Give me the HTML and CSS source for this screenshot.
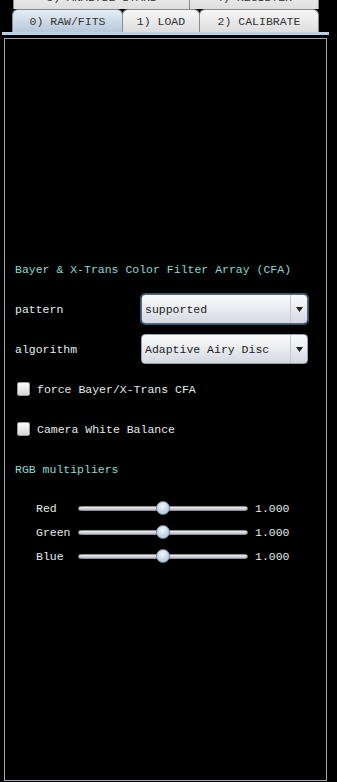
FILE: index.html
```html
<!DOCTYPE html>
<html>
<head>
<meta charset="utf-8">
<link rel="stylesheet" href="styles.css">
</head>
<body>
<div class="app">
  <div class="tabs-back">
    <div class="tab tab-back tab-w3">3) ANALYSE STARS</div>
    <div class="tab tab-back tab-w4">4) REGISTER</div>
  </div>
  <div class="tabs-front">
    <div class="tab tab-selected tab-w0">0) RAW/FITS</div>
    <div class="tab tab-w1">1) LOAD</div>
    <div class="tab tab-w2">2) CALIBRATE</div>
  </div>
  <div class="tab-line"></div>
  <div class="panel">
    <div class="row heading">Bayer &amp; X-Trans Color Filter Array (CFA)</div>
    <div class="row">
      <span class="label">pattern</span>
      <div class="combo focused"><span class="combo-text">supported</span><span class="combo-arrow"><svg width="7" height="5" viewBox="0 0 7 5"><path d="M0 0H7L3.5 5Z" fill="#222"/></svg></span></div>
    </div>
    <div class="row">
      <span class="label">algorithm</span>
      <div class="combo"><span class="combo-text">Adaptive Airy Disc</span><span class="combo-arrow"><svg width="7" height="5" viewBox="0 0 7 5"><path d="M0 0H7L3.5 5Z" fill="#222"/></svg></span></div>
    </div>
    <div class="row">
      <span class="checkbox"></span><span class="check-label">force Bayer/X-Trans CFA</span>
    </div>
    <div class="row">
      <span class="checkbox"></span><span class="check-label">Camera White Balance</span>
    </div>
    <div class="row heading">RGB multipliers</div>
    <div class="sliders">
      <div class="slider-row">
        <span class="slider-label">Red</span>
        <div class="track"><span class="thumb"></span></div>
        <span class="slider-value">1.000</span>
      </div>
      <div class="slider-row">
        <span class="slider-label">Green</span>
        <div class="track"><span class="thumb"></span></div>
        <span class="slider-value">1.000</span>
      </div>
      <div class="slider-row">
        <span class="slider-label">Blue</span>
        <div class="track"><span class="thumb"></span></div>
        <span class="slider-value">1.000</span>
      </div>
    </div>
  </div>
</div>
</body>
</html>
```
FILE: styles.css
```css
* { box-sizing: border-box; }
html, body {
  margin: 0;
  padding: 0;
  background: #000;
}
body {
  font-family: "Liberation Mono", "Courier New", monospace;
  font-size: 11.5px;
  color: #e2ecea;
  width: 337px;
  height: 782px;
  overflow: hidden;
}
.app {
  display: flex;
  flex-direction: column;
}
.tabs-back {
  height: 9px;
  overflow: hidden;
  display: flex;
  align-items: flex-end;
  padding-left: 13px;
}
.tabs-front {
  height: 23px;
  display: flex;
  padding-left: 12px;
}
.tab {
  display: flex;
  align-items: center;
  justify-content: center;
  border: 1px solid #8c8c90;
  border-bottom: none;
  border-radius: 6px 6px 0 0;
  background: linear-gradient(#f6f6f6, #dedede);
  color: #333;
  white-space: nowrap;
}
.tab + .tab { margin-left: -1px; }
.tab-back { height: 24px; }
.tab-w3 { width: 177px; }
.tab-w4 { width: 130px; }
.tab-w0 { width: 111px; }
.tab-w1 { width: 78px; }
.tab-w2 { width: 120px; }
.tab-selected {
  background: linear-gradient(#e6edf3, #b6c9da);
  border-color: #7e8c98;
}
.tab-line {
  height: 3px;
  width: 327px;
  margin-left: 2px;
  background: #bcd0e4;
}
.panel {
  margin-top: 3px;
  margin-left: 4px;
  width: 323px;
  height: 743px;
  border: 1px solid #a4a4ac;
  padding: 210px 10px 0 10px;
  display: flex;
  flex-direction: column;
}
.row {
  height: 40px;
  display: flex;
  align-items: center;
}
.heading {
  color: #86dcd2;
}
.label {
  width: 126px;
  flex: none;
}
.combo {
  width: 167px;
  height: 30px;
  display: flex;
  align-items: stretch;
  border: 1px solid #9aa2ac;
  border-radius: 4px;
  background: linear-gradient(#fbfbfc, #e6e9ee 55%, #d4d9e0);
  color: #222;
}
.combo.focused {
  box-shadow: 0 0 0 1px #3d5670;
  border-color: #4f6983;
}
.combo-text {
  flex: 1;
  display: flex;
  align-items: center;
  padding-left: 3px;
}
.combo-arrow {
  width: 17px;
  display: flex;
  align-items: center;
  justify-content: center;
  border-left: 1px solid #c4c9d0;
}
.checkbox {
  width: 13px;
  height: 14px;
  margin-left: 2px;
  border: 1px solid #9a9a9a;
  border-radius: 2px;
  background: linear-gradient(#fdfdfd, #d6d6d6);
  flex: none;
}
.check-label {
  margin-left: 7px;
}
.sliders {
  margin-top: 7px;
  display: flex;
  flex-direction: column;
}
.slider-row {
  height: 24px;
  display: flex;
  align-items: center;
  padding-left: 21px;
}
.slider-label {
  width: 42px;
  flex: none;
}
.track {
  position: relative;
  width: 170px;
  height: 5px;
  border-radius: 3px;
  background: linear-gradient(#eceef0, #b8bcc2);
  border: 1px solid #8c9096;
  flex: none;
}
.thumb {
  position: absolute;
  left: 50%;
  top: 50%;
  width: 14px;
  height: 14px;
  margin-left: -7px;
  margin-top: -7px;
  border-radius: 50%;
  background: radial-gradient(circle at 45% 35%, #f2f6fb, #bccfe2 70%, #9cb4cc);
  border: 1px solid #6f889f;
}
.slider-value {
  margin-left: 7px;
}
```
